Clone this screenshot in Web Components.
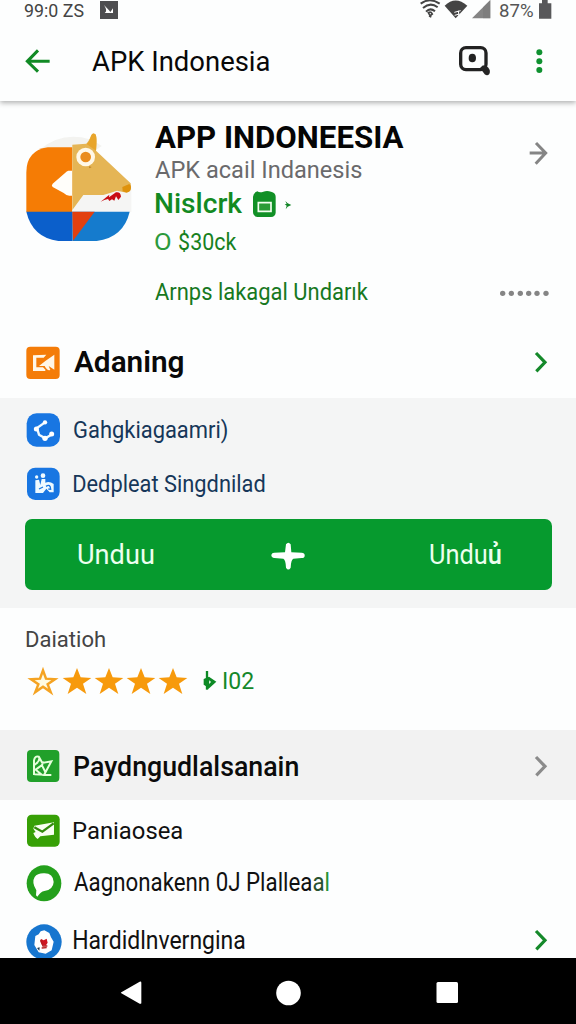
<!DOCTYPE html>
<html lang="id">
<head>
<meta charset="utf-8">
<title>APK Indonesia</title>
<style>
html,body{margin:0;height:100%;overflow:hidden;background:#fdfefe}
body{font-family:Roboto,"Noto Sans",sans-serif}
</style>
</head>
<body>
<store-app></store-app>
<script>
const define=(name,html,setup)=>customElements.define(name,class extends HTMLElement{
  connectedCallback(){
    if(this.shadowRoot)return;
    const t=document.createElement('template');
    t.innerHTML=html;
    this.attachShadow({mode:'open'}).append(t.content.cloneNode(true));
    if(setup)setup(this);
  }
});

/* A single line of text condensed or widened so that its ink spans the given width. */
define('fit-text',`<style>:host{display:block;white-space:pre;flex:none}span{display:block;width:max-content;transform-origin:0 50%}</style><span><slot></slot></span>`,el=>{
  const s=+el.getAttribute('size'),wt=el.getAttribute('weight')||'400',w=+el.getAttribute('w'),txt=el.textContent;
  const c=document.createElement('canvas').getContext('2d');
  c.font=`${wt} ${s}px Roboto, "Noto Sans", sans-serif`;
  const m=c.measureText(txt),ink=m.actualBoundingBoxLeft+m.actualBoundingBoxRight,k=w/ink;
  el.style.fontSize=s+'px';el.style.fontWeight=wt;el.style.width=w+'px';
  el.style.lineHeight=el.getAttribute('lh')||'1.3';el.style.color=el.getAttribute('color')||'#111';
  el.shadowRoot.querySelector('span').style.transform=`translateX(${m.actualBoundingBoxLeft*k}px) scaleX(${k})`;
});

const art={
 logo:[130,130,'0 0 390 390',`<path d="M75 88Q120 50 175 50Q225 50 260 78L200 120Z" fill="#f3f3f0"/><path d="M172 82H98Q34 92 34 158V276H172Z" fill="#f57c05"/><path d="M172 226L320 205L349 205V276H172Z" fill="#f5f5f4"/><path d="M34 275H172V363H130Q52 352 34 275Z" fill="#0b5fcb"/><path d="M172 275H344Q326 352 245 363H172Z" fill="#157bcd"/><path d="M172 275H239L174 362Z" fill="#e2400f"/><path d="M172 74L214 71Q220 66 228 48Q232 38 240 42Q247 45 243 92L347 190Q352 214 335 218L306 212Q288 218 265 225H205L172 270Z" fill="#e5b555"/><path d="M215 72Q223 66 228 48Q232 38 240 42Q247 45 243 92Z" fill="#e8a52b"/><circle cx="212" cy="111" r="28" fill="#fff8e8"/><circle cx="212" cy="111" r="16" fill="#ea8c1d"/><path d="M222 139L230 141L223 145Z" fill="#b87f24"/><path d="M171 152H160Q155 153 151 158L113 191Q108 196 113 201L146 219Q155 228 165 227H171Z" fill="#fffefa"/><path d="M322 201L343 192Q352 200 345 213Q337 221 323 214Z" fill="#df920c"/><path d="M257 245L283 224L282 232L303 217Q317 215 318 230L310 240L303 229L298 242L291 238L283 243L279 237L268 240Z" fill="#c90d16"/>`],
 thumb:[18,18,'0 0 54 54',`<path d="M0 0H54V54H0Z" fill="#4e4e50"/><path d="M12 12L27 28L31 33L39 22V36H14Q24 31 12 12Z" fill="#fff"/>`],
 back:[26,26,'75 141 78 78',`<path d="M114 148L82 181L114 212M84 181H149" fill="none" stroke="#118a25" stroke-width="9"/>`],
 wifi1:[22,19,'50 0 66 57',`<g fill="none" stroke="#444" stroke-width="6"><path d="M55 11Q82-9 112 11M62 24Q84 5 106 22M71 35Q84 22 98 34"/><path d="M80 50L90 42Q86 34 78 38L86 52" stroke-width="5"/></g>`],
 wifi2:[24,19,'132 0 72 57',`<path d="M134 17Q166-14 202 17L167 55Z" fill="#444"/><path d="M163 37L182 32M164 46L178 42M175 32L177 48" stroke="#fff" stroke-width="3"/>`],
 signal:[20,19,'208 0 60 57',`<path d="M211 55H266V0Z" fill="#858585"/><path d="M244 55H266V0L244 22Z" fill="#777" opacity=".5"/>`],
 battery:[14,19,'411 0 42 57',`<path d="M414 10H423V0H440V10H451V56H414Z" fill="#58585a"/>`],
 search:[34,34,'176 135 102 102',`<rect x="184" y="146" width="76" height="66" rx="16" fill="none" stroke="#222" stroke-width="10"/><path d="M242 207L251 199L266 205Q275 215 270 225Q264 232 256 226Z" fill="#252525"/><ellipse cx="219" cy="177" rx="11" ry="13" fill="#222"/>`],
 more:[10,26,'404 143 30 78',`<g fill="#0f9130"><circle cx="420" cy="156" r="9"/><circle cx="420" cy="183" r="9"/><circle cx="420" cy="209" r="9"/></g>`],
 fwd:[22,26,'146 58 66 78',`<path d="M170 67L199 97L169 129M151 97H199" fill="none" stroke="#858585" stroke-width="9"/>`],
 dots:[52,8,'54 506 156 24',`<g fill="#858585"><circle cx="68" cy="519" r="8"/><circle cx="94" cy="519" r="8"/><circle cx="121" cy="519" r="8"/><circle cx="146" cy="519" r="8"/><circle cx="171" cy="519" r="8"/><circle cx="198" cy="519" r="8"/></g>`],
 chev:[14,24,'0 0 42 72',`<path d="M6 9L33 37L7 64" fill="none" stroke="currentColor" stroke-width="9.5"/>`],
 gift:[24,28,'322 220 72 84',`<path d="M338 224Q345 229 356 225Q367 221 379 225Q393 228 393 240V288Q392 300 379 301H338Q325 298 325 286V240Q326 228 338 224Z" fill="#119026"/><path d="M341 258H379V284H341Z" fill="#2a9b36" stroke="#f3fff0" stroke-width="5"/>`],
 tick:[8,10,'420 250 24 30',`<path d="M424 253L431 260L442 265L431 270L425 278L428 267L422 263L428 262Z" fill="#118526"/>`],
 camera:[34,34,'33 34 102 102',`<rect x="34" y="36" width="100" height="97" rx="12" fill="#f47c08"/><path d="M54 62L94 60L86 69H64V98H84L92 106L90 109H54Z" fill="#fff7e8"/><path d="M118 60V105L101 94L106 106Q96 109 89 94L72 94L92 78Z" fill="#fff7e8"/>`],
 share:[34,34,'33 235 102 102',`<rect x="35" y="236" width="100" height="100" rx="30" fill="#1876e2"/><path d="M89 264L66 280L72 300L91 311L109 300" fill="none" stroke="#f2fbff" stroke-width="7"/><g fill="#fff"><circle cx="90" cy="263" r="6.5"/><circle cx="64" cy="283" r="7.5"/><circle cx="90" cy="311" r="8"/><circle cx="110" cy="298" r="7.5"/></g>`],
 people:[34,34,'33 396 102 102',`<rect x="36" y="398" width="98" height="97" rx="25" fill="#1876e2"/><g fill="#eefaff"><circle cx="65" cy="426" r="5"/><circle cx="84" cy="422" r="7"/><path d="M61 436L72 434L76 450L80 432H91L91 443Q104 438 116 447V472H104L94 461L84 474H61Z"/></g><path d="M72 462L84 456M93 454Q106 445 107 463L100 462" fill="none" stroke="#1876e2" stroke-width="4"/>`],
 plus:[36,28,'712 98 108 84',`<path d="M757 105Q764 95 771 105L773 129L804 130Q814 131 813 139Q813 146 804 146L779 148Q772 151 771 175Q764 186 757 175Q756 151 749 148L722 146Q713 145 713 138Q713 131 722 130L754 129Z" fill="#fff"/>`],
 star:[32,30,'0 0 96 90',`<path d="M48 6L59 34L91 36L66 53L76 84L48 65L20 84L30 53L5 36L37 34Z" fill="#f79a0c"/>`],
 starEmpty:[32,30,'0 0 96 90',`<path d="M48 13L57 38L84 40L62 55L71 78L48 62L25 78L34 55L12 40L39 38Z" fill="#fffbe2" stroke="#f5a322" stroke-width="7.5"/>`],
 flag:[14,22,'563 148 42 66',`<path d="M575 151V207" stroke="#0d8a25" stroke-width="7"/><path d="M565 175L581 168L603 183L579 205L576 199L565 192Z" fill="#0d8a25"/><path d="M582 179L587 184L581 190Z" fill="#fff"/>`],
 pay:[34,34,'33 42 102 102',`<rect x="36" y="45" width="97" height="96" rx="12" fill="#21a02a"/><g fill="none" stroke="#e6ffdb" stroke-width="6"><path d="M57 120V76Q60 61 71 65Q78 75 62 87L56 91M58 118L80 119L62 104L81 90L85 80M72 66L82 84L109 79L87 120H109M81 91L91 111"/></g>`],
 mail:[34,34,'33 236 102 102',`<rect x="36" y="238" width="98" height="96" rx="14" fill="#37a006"/><path d="M58 271L117 261V298L76 303L68 311Q60 307 55 293L62 290L55 280Z" fill="#f9fff2"/><path d="M58 276L82 289L116 264" fill="none" stroke="#338b0c" stroke-width="7"/>`],
 chat:[36,37,'32 29 108 111',`<ellipse cx="86" cy="84" rx="52" ry="54" fill="#24a01c"/><path d="M84 54Q113 52 115 80Q114 103 87 107Q76 109 66 124L62 120L63 105Q48 81 58 65Q66 54 84 54Z" fill="#fff"/>`],
 round:[36,36,'32 204 108 108',`<circle cx="86" cy="258" r="53" fill="#1776cf"/><path d="M76 226L87 223L102 231L107 244L115 257L109 283L91 293L70 289L57 267L60 240L70 235Z" fill="#fff"/><path d="M77 249L85 253L94 248L97 260L91 269L80 267L75 257Z" fill="#ce1522"/><path d="M76 251L83 270L96 270M79 276L94 275" fill="none" stroke="#b51d20" stroke-width="4"/><path d="M65 276L73 274L72 284Z" fill="#183449"/>`],
 navBack:[22,26,'316 374 66 78',`<path d="M320 411L375 379Q380 377 380 382V442Q380 447 375 445L320 414Q317 412 320 411Z" fill="#fff"/>`],
 navHome:[26,26,'0 0 26 26',`<circle cx="12.5" cy="13" r="12.3" fill="#fff"/>`],
 navRecent:[22,22,'0 0 22 22',`<rect x=".5" width="21.5" height="21" rx="1.5" fill="#fff"/>`]
};
define('ui-icon',`<style>:host{display:block;flex:none}svg{display:block}</style><div></div>`,el=>{
  const [w,h,vb,body]=art[el.getAttribute('name')];
  el.shadowRoot.querySelector('div').innerHTML=`<svg width="${w}" height="${h}" viewBox="${vb}">${body}</svg>`;
});

define('status-bar',`<style>:host{display:flex;height:24px;margin-bottom:-3px;box-sizing:border-box;padding:0 24px;align-items:flex-start;position:relative;z-index:2;background:#fdfefe}
.thumb{margin:1px 0 0 16px}.right{margin-left:auto;display:flex;gap:3px}.pc{margin:0 2px 0 6px}</style>
<fit-text size="18.5" lh="22px" w="60" color="#444">99:0 ZS</fit-text><ui-icon class="thumb" name="thumb"></ui-icon>
<div class="right"><ui-icon name="wifi1"></ui-icon><ui-icon name="wifi2"></ui-icon><ui-icon name="signal"></ui-icon><fit-text class="pc" size="18.5" lh="22px" w="33" color="#555">87%</fit-text><ui-icon name="battery"></ui-icon></div>`);

define('app-bar',`<style>:host{display:flex;height:80px;box-sizing:border-box;align-items:center;padding:0 32px 0 25px;position:relative;z-index:1;box-shadow:0 2px 5px #0000004d;background:#fdfefe}
.t{margin:2px 0 0 41px}.s{margin-left:auto}.m{margin:0 0 0 42px}</style>
<ui-icon name="back"></ui-icon><fit-text class="t" size="28.5" w="177" color="#080808">APK Indonesia</fit-text><ui-icon class="s" name="search"></ui-icon><ui-icon class="m" name="more"></ui-icon>`);

define('app-summary',`<style>:host{display:grid;grid-template-columns:130px 1fr 52px;height:224px;box-sizing:border-box;padding:19px 26px 0 15px}
.info{display:grid;grid-template-rows:36px 29px 39px 37px 63px;align-items:center;padding-left:9.5px}
.line{display:flex;align-items:center}.side{display:grid;grid-template-rows:66px 1fr 65px;align-items:center;justify-items:end}
.gift{margin:-2px 0 0 9.5px}.tick{margin-left:8px}.dollar{margin-left:8px}</style>
<ui-icon name="logo"></ui-icon>
<div class="info"><fit-text size="32" weight="700" w="249" color="#050505">APP INDONEESIA</fit-text>
<fit-text size="24" w="207" color="#6a6a6c">APK acail Indanesis</fit-text>
<div class="line"><fit-text size="27" weight="500" w="88" color="#128a22">Nislcrk</fit-text><ui-icon class="gift" name="gift"></ui-icon><ui-icon class="tick" name="tick"></ui-icon></div>
<div class="line"><fit-text size="24" w="16" color="#2c9a3c">O</fit-text><fit-text class="dollar" size="24" w="58" color="#17811f">$30ck</fit-text></div>
<fit-text size="23.5" w="213" color="#17781f">Arnps lakagal Undarık</fit-text></div>
<div class="side"><ui-icon name="fwd"></ui-icon><span></span><ui-icon name="dots"></ui-icon></div>`);

define('list-row',`<style>:host{display:flex;align-items:center;box-sizing:border-box;padding:0 28px 0 26px}
.ico{width:36px;flex:none;display:flex}.text{margin:1px 0 0 11.5px}.end{margin-left:auto}</style>
<div class="ico"><slot name="icon"></slot></div><div class="text"><slot></slot></div><div class="end"><slot name="end"></slot></div>`);

define('install-button',`<style>:host{display:grid;grid-template-columns:1fr 36px 1fr;align-items:center;height:71px;margin:9px 24px 0 25px;box-sizing:border-box;padding:3px 51px 0 53px;background:#069a2e;border-radius:7px}
.p{margin-left:-1px}.e{justify-self:end}</style>
<fit-text size="27" w="76" color="#ecffef">Unduu</fit-text><ui-icon class="p" name="plus"></ui-icon><fit-text class="e" size="27" w="71" color="#ecffef">Undu<b style="font-weight:500">ủ</b></fit-text>`);

define('rating-block',`<style>:host{display:block;height:122px;box-sizing:border-box;padding:17px 26px 0}
.l{height:31px;display:flex;align-items:center}.r{height:52px;display:flex;align-items:center;padding-left:1px}.r ui-icon[name=starEmpty]{margin-right:1.5px}.r ui-icon{margin-right:.2px;margin-top:-3px}.r .flag{margin:-2px 0 0 14px}.n{margin:-1px 0 0 7px}</style>
<div class="l"><fit-text size="22" w="79" color="#444">Daiatioh</fit-text></div>
<div class="r"><ui-icon name="starEmpty"></ui-icon><ui-icon name="star"></ui-icon><ui-icon name="star"></ui-icon><ui-icon name="star"></ui-icon><ui-icon name="star"></ui-icon><ui-icon class="flag" name="flag"></ui-icon><fit-text class="n" size="23.5" w="30" color="#15882a">I02</fit-text></div>`);

define('nav-bar',`<style>:host{display:grid;grid-template-columns:22px 26px 22px;justify-content:start;column-gap:134px;padding:3px 0 0 120px;align-items:center;height:66px;box-sizing:border-box;background:#000}</style>
<ui-icon name="navBack"></ui-icon><ui-icon name="navHome"></ui-icon><ui-icon name="navRecent"></ui-icon>`);

define('store-app',`<style>:host{display:flex;flex-direction:column;width:576px;height:1024px;overflow:hidden;background:#fdfefe}
main{flex:1;min-height:0;overflow:hidden}.gray{background:#f4f5f5}.download{height:210px;box-sizing:border-box;padding-top:5px}
.g{color:#15892a}.d{color:#8b8b8b}</style>
<status-bar></status-bar><app-bar></app-bar>
<main><app-summary></app-summary>
<list-row style="height:73px"><ui-icon slot="icon" name="camera" style="margin-top:3px"></ui-icon><fit-text size="29" weight="600" w="109" color="#090909" style="margin-top:1px">Adaning</fit-text><ui-icon slot="end" class="g" name="chev"></ui-icon></list-row>
<section class="gray download">
<list-row style="height:54px"><ui-icon slot="icon" name="share"></ui-icon><fit-text size="24.5" w="153" color="#163759" style="margin-top:-2px">Gahgkiagaamri)</fit-text></list-row>
<list-row style="height:53px"><ui-icon slot="icon" name="people"></ui-icon><fit-text size="24.5" w="191" color="#163759">Dedpleat Singdnilad</fit-text></list-row>
<install-button></install-button></section>
<rating-block></rating-block>
<list-row style="height:70px;background:#f2f2f2"><ui-icon slot="icon" name="pay" style="margin-top:2px"></ui-icon><fit-text size="27.5" weight="500" w="224" color="#0b0b0b" style="margin-top:3px">Paydngudlalsanain</fit-text><ui-icon slot="end" class="d" name="chev" style="margin-top:2px"></ui-icon></list-row>
<list-row style="height:61px"><ui-icon slot="icon" name="mail"></ui-icon><fit-text size="24.5" w="108">Paniaosea</fit-text></list-row>
<list-row style="height:43px"><ui-icon slot="icon" name="chat" style="margin-top:2px"></ui-icon><fit-text size="25" w="255">Aagnonakenn 0J Plallea<span style="color:#28522f">a</span><span style="color:#239334">l</span></fit-text></list-row>
<list-row style="height:72px"><ui-icon slot="icon" name="round" style="margin-top:3px"></ui-icon><fit-text size="25.5" w="171">Hardidlnverngina</fit-text><ui-icon slot="end" class="g" name="chev"></ui-icon></list-row>
</main><nav-bar></nav-bar>`);
</script>
</body>
</html>
